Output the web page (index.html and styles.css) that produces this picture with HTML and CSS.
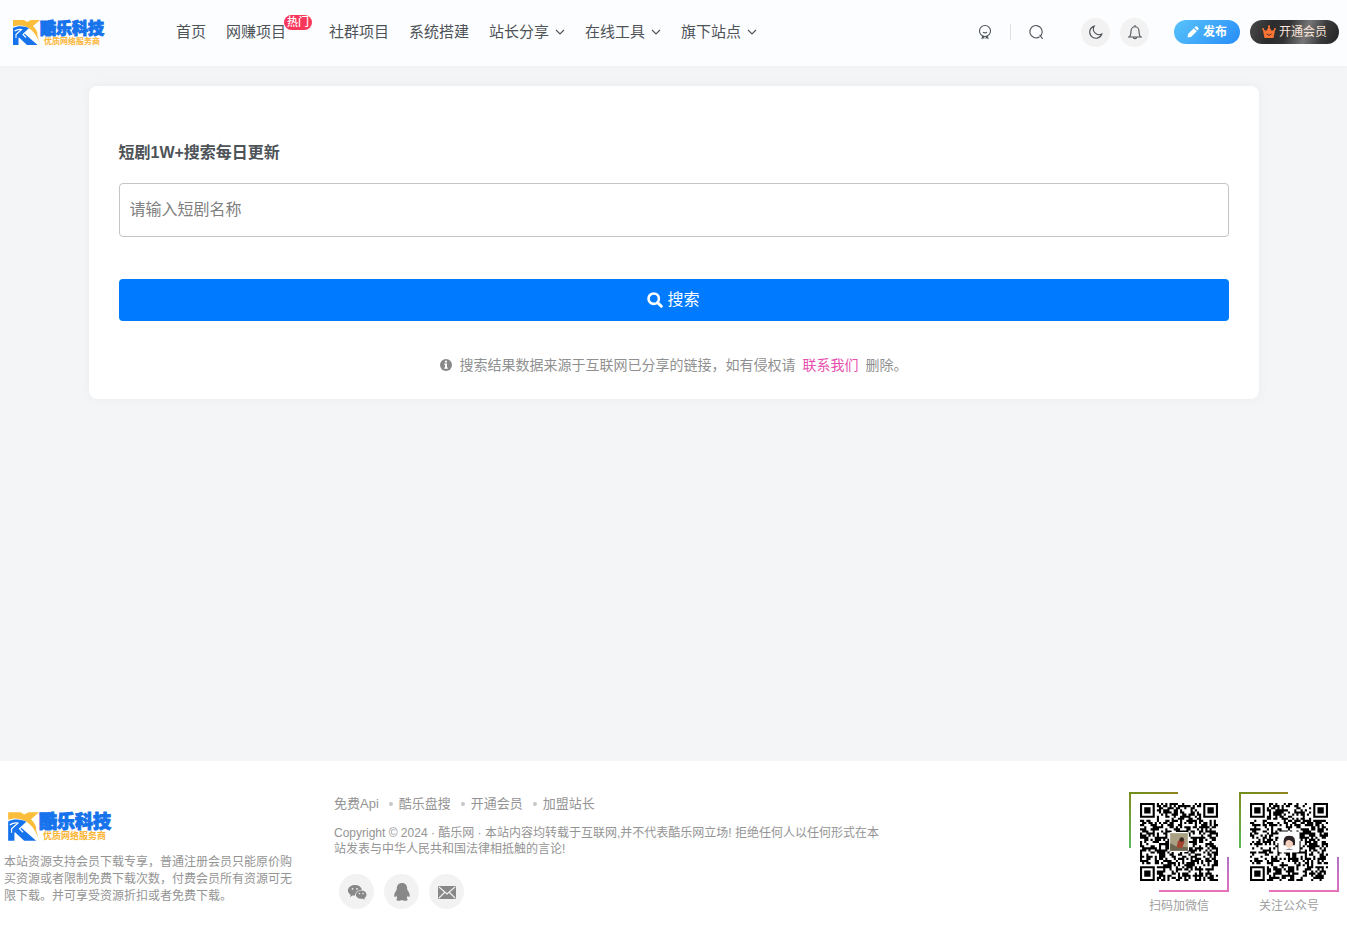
FILE: index.html
```html
<!DOCTYPE html>
<html lang="zh-CN">
<head>
<meta charset="utf-8">
<meta name="viewport" content="width=device-width, initial-scale=1">
<title>短剧搜索 - 酷乐科技</title>
<link rel="stylesheet" href="styles.css">
</head>
<body>
<svg class="defs" aria-hidden="true">
  <symbol id="mark" viewBox="0 0 28 28">
    <path fill="#fbbd3a" d="M1 2H12L15 4L19 2H28L21 8C24 11 26 14 25.5 18L28 26C24 14 16 6.500 6 7.500L1 8.500Z"/>
    <path fill="#1673ec" d="M1 10C6 7.500 13 8 17.500 10.500L12.500 15.500L25.500 27H15L7 19.500L6.500 20V27H1Z"/>
    <path d="M4 20V16.500L9.500 11.500Q6 10.800 2.500 13M17.500 10.500L11 16.500L14 19.500" fill="none" stroke="#fff" stroke-width="1.100"/>
  </symbol>
  <symbol id="chevron" viewBox="0 0 10 10"><path d="M1 3L5 7L9 3" fill="none" stroke="currentColor" stroke-width="1.1"/></symbol>
</svg>

<header class="header">
  <a class="brand logo" href="#"><svg><use href="#mark"/></svg><span class="logo-text"><b>酷乐科技</b><small>优质网络服务商</small></span></a>
  <nav class="nav">
    <a href="#">首页</a>
    <a class="hot" href="#">网赚项目<span class="badge">热门</span></a>
    <a href="#">社群项目</a>
    <a href="#">系统搭建</a>
    <a href="#">站长分享<svg class="chev"><use href="#chevron"/></svg></a>
    <a href="#">在线工具<svg class="chev"><use href="#chevron"/></svg></a>
    <a href="#">旗下站点<svg class="chev"><use href="#chevron"/></svg></a>
  </nav>
  <div class="tools">
    <button class="icon-btn" aria-label="用户"><svg viewBox="0 0 16 16"><circle cx="8" cy="7" r="5.5"/><path d="M6 8.2Q8 9.6 10 8.2M6 12L4.800 15M6 12L7.2 14.6M10 12L8.8 14.6M10 12L11.200 15"/></svg></button>
    <span class="divider"></span>
    <button class="icon-btn" aria-label="搜索"><svg viewBox="0 0 16 16"><path d="M11.6 12.8A6.2 6.2 0 1 1 13.4 10.8Q13 12 11.6 11M12 11.5L14.6 14.8"/></svg></button>
    <button class="icon-btn round moon" aria-label="夜间模式"><svg viewBox="0 0 16 16"><path d="M6.2 2.1A5.7 5.7 0 0 0 13.8 10A6.2 6.2 0 1 1 6.2 2.1Z"/></svg></button>
    <button class="icon-btn round" aria-label="消息"><svg viewBox="0 0 16 16"><path d="M1 13H15M2.8 12.8Q4 10.5 4 7.2A4 4.4 0 0 1 12 7.2Q12 10.5 13.2 12.8M8 1V3M6.3 13.6Q8 16 9.7 13.6"/></svg></button>
    <button class="pill publish"><svg viewBox="0 0 12 12"><path fill="#fff" d="M.5 11.5L1 8L6.8 2.2L9.8 5.2L4 11ZM7.5 1.5L8.5 .6Q9.5 0 10.3 .8L11.2 1.7Q12 2.6 11.3 3.5L10.4 4.4Z"/></svg>发布</button>
    <button class="pill vip"><svg viewBox="0 0 14 14"><path fill="#ff7434" d="M1.8 9.6H12.2L11.5 13H2.5ZM.8 4L4.2 6L7 1.5L9.8 6L13.2 4L12.2 9.8H1.8Z"/><g fill="#ff7434"><circle cx="7" cy="1.4" r="1.1"/><circle cx="1.1" cy="4" r="1"/><circle cx="12.9" cy="4" r="1"/></g><path d="M4.5 9Q7 11.5 9.5 9" fill="none" stroke="#54302a"/></svg>开通会员</button>
  </div>
</header>

<main class="main">
  <form class="card">
    <label class="title" for="q">短剧1W+搜索每日更新</label>
    <input class="field" id="q" type="text" placeholder="请输入短剧名称">
    <button class="submit" type="button"><svg viewBox="0 0 16 16"><circle cx="6.7" cy="6.7" r="5.2" fill="none" stroke="#fff" stroke-width="2.6"/><path d="M10.5 10.5L14.3 14.3" stroke="#fff" stroke-width="3" stroke-linecap="round"/></svg>搜索</button>
    <p class="notice"><svg viewBox="0 0 12 12"><circle cx="6" cy="6" r="6" fill="#888"/><path fill="#fff" d="M5 1.8H7V3.5H5ZM4.2 4.6H7V8.6H7.8V9.8H4.2V8.6H5V5.8H4.2Z"/></svg>搜索结果数据来源于互联网已分享的链接，如有侵权请<a href="#">联系我们</a>删除。</p>
  </form>
</main>

<footer class="footer">
  <section class="about">
    <div class="logo logo-large"><svg><use href="#mark"/></svg><span class="logo-text"><b>酷乐科技</b><small>优质网络服务商</small></span></div>
    <p>本站资源支持会员下载专享，普通注册会员只能原价购买资源或者限制免费下载次数，付费会员所有资源可无限下载。并可享受资源折扣或者免费下载。</p>
  </section>
  <section class="info">
    <ul class="links">
      <li><a href="#">免费Api</a></li>
      <li><a href="#">酷乐盘搜</a></li>
      <li><a href="#">开通会员</a></li>
      <li><a href="#">加盟站长</a></li>
    </ul>
    <p>Copyright © 2024 · 酷乐网 · 本站内容均转载于互联网,并不代表酷乐网立场! 拒绝任何人以任何形式在本站发表与中华人民共和国法律相抵触的言论!</p>
    <div class="social">
      <a href="#" aria-label="微信"><svg viewBox="0 0 20 20"><path fill="#888" d="M8 3C12 3 14.6 5.2 14.8 8C11 7.6 8 10 8.2 13.6L5.5 13.4L3 15L3.6 12.7C-1.4 9.6 1 3 8 3Z"/><path fill="#888" d="M14 8.6C20 8.6 21 14 17.3 16L17.8 17.8L15.5 16.7C11 17.2 8.8 15 8.9 12.6C9 10.5 11 8.6 14 8.6Z"/><g fill="#f2f2f2"><circle cx="5.5" cy="6.8" r=".9"/><circle cx="10" cy="6.8" r=".9"/><circle cx="12.4" cy="11.5" r=".8"/><circle cx="16" cy="11.5" r=".8"/></g></svg></a>
      <a href="#" aria-label="QQ"><svg viewBox="0 0 20 20"><path fill="#888" d="M10 1C13.5 1 15.4 3.5 15.2 7.5C17 10 18.5 13 17.5 15C17 15.4 16.3 14.5 15.8 13.8L14.7 16.2C16 17 16 18.5 14 18.8C12 19 11 18.5 10 18C9 18.5 8 19 6 18.8C4 18.5 4 17 5.3 16.2L4.2 13.8C3.7 14.5 3 15.4 2.5 15C1.5 13 3 10 4.8 7.5C4.6 3.5 6.5 1 10 1Z"/></svg></a>
      <a href="#" aria-label="邮箱"><svg viewBox="0 0 20 20"><rect x="1" y="4" width="18" height="13" rx="1" fill="#888"/><path d="M2 5L10 12L18 5M2 16L7.5 10.5M18 16L12.5 10.5" fill="none" stroke="#f2f2f2" stroke-width="1.1"/></svg></a>
    </div>
  </section>
  <section class="codes">
    <figure>
      <div class="frame"><svg class="qr" viewBox="0 0 37 37" data-seed="7" role="img" aria-label="微信二维码"><path class="modules"/><rect x="13.8" y="13.8" width="9.4" height="9.4" rx="1" fill="#fff"/><rect x="14.3" y="14.3" width="8.4" height="8.4" fill="#aaa084"/><path fill="#6d6652" d="M14.3 19L17 20.5L22.7 21V22.7H14.3Z"/><path fill="#a3442e" d="M17.4 21L18 18L20 16.8L21.2 18.5L19.8 21.5Z"/><circle cx="19.8" cy="17.3" r="1.1" fill="#3b2820"/></svg></div>
      <figcaption>扫码加微信</figcaption>
    </figure>
    <figure>
      <div class="frame"><svg class="qr" viewBox="0 0 37 37" data-seed="29" role="img" aria-label="公众号二维码"><path class="modules"/><rect x="13.5" y="13.5" width="10" height="10" rx="1" fill="#fff"/><path fill="#2d2525" d="M16 20Q15.4 15.4 18.6 15.6Q22 15.4 21.3 20Z"/><circle cx="18.6" cy="19.4" r="1.8" fill="#f3cfbd"/><path fill="#2d2525" d="M16.5 18.8L18 17L20.8 18.8V17.2L18.6 16.2Z"/><path fill="#8b8795" d="M16.8 22.3Q18.6 20.8 20.4 22.3Z"/></svg></div>
      <figcaption>关注公众号</figcaption>
    </figure>
  </section>
</footer>
<script src="qr.js"></script>
</body>
</html>
```
FILE: styles.css
```css
* { box-sizing: border-box; }
body {
  margin: 0;
  min-height: 100vh;
  display: flex;
  flex-direction: column;
  background: #f4f5f7;
  color: #4e5358;
  font: 14px/20px "Liberation Sans", "Noto Sans CJK SC", sans-serif;
}
a { color: inherit; text-decoration: none; }
button { font: inherit; border: 0; padding: 0; cursor: pointer; }
p, ul, figure { margin: 0; padding: 0; }
.defs { position: absolute; width: 0; height: 0; }

.logo { display: flex; align-items: center; height: 28px; font-family: "Noto Sans CJK SC", sans-serif; }
.logo svg { width: 28px; height: 28px; }
.logo-text { display: flex; flex-direction: column; }
.logo b { color: #1673ec; font-size: 16px; font-weight: 900; line-height: 18px; -webkit-text-stroke: 1px #1673ec; }
.logo small { padding-left: 4px; color: #fbb536; font-size: 8px; font-weight: 700; line-height: 10px; }
.logo-large { height: 31px; padding-left: 3px; }
.logo-large svg { width: 32px; height: 32px; }
.logo-large b { font-size: 18px; line-height: 20px; }
.logo-large small { font-size: 9px; line-height: 11px; }

.header {
  display: flex;
  align-items: center;
  height: 66px;
  padding: 0 8px 2px 12px;
  background: #fcfdff;
  box-shadow: 0 0 4px rgba(0, 0, 0, .03);
}
.brand { margin-right: 72px; }
.nav { display: flex; gap: 20px; font-size: 15px; white-space: nowrap; }
.nav a { display: flex; align-items: center; }
.hot { position: relative; margin-right: 23px; }
.badge {
  position: absolute;
  left: 58px;
  top: -7px;
  padding: 0 3px;
  border-radius: 8px;
  background: #f7385a;
  color: #fff;
  font-size: 11px;
  font-weight: 500;
  line-height: 15px;
}
.chev { width: 10px; height: 10px; margin-left: 6px; }
.tools { display: flex; align-items: center; margin-left: auto; }
.icon-btn { display: flex; align-items: center; justify-content: center; width: 29px; height: 29px; background: none; }
.icon-btn svg { width: 16px; height: 16px; fill: none; stroke: #4e5358; stroke-width: 1.1; }
.divider { width: 1px; height: 16px; margin: 0 10px 0 11px; background: #dfe1e5; }
.round { border-radius: 50%; background: #f2f2f2; margin-right: 10px; }
.moon { margin-left: 31px; }
.pill { display: flex; align-items: center; justify-content: center; height: 24px; border-radius: 12px; color: #fff; font-size: 12px; }
.publish { width: 66px; gap: 4px; margin: 0 10px 0 15px; background: linear-gradient(135deg, #59c3fb, #268df7); font-weight: 700; }
.publish svg { width: 12px; height: 12px; }
.vip { width: 89px; gap: 3px; background: linear-gradient(110deg, #4a4a4a, #2c2c2c 25%, #333 42%, #777 62%, #3a3a3a 80%, #222); color: #fbe5da; }
.vip svg { width: 14px; height: 14px; }

.main { flex: 1; padding: 20px; }
.card {
  display: flex;
  flex-direction: column;
  max-width: 1170px;
  margin: 0 auto;
  padding: 56px 30px 24px;
  border-radius: 8px;
  background: #fff;
  box-shadow: 0 0 10px rgba(116, 116, 116, .08);
}
.title { font-size: 16px; font-weight: 700; line-height: 21px; }
.field {
  height: 54px;
  margin: 20px 0 42px;
  padding: 0 10px;
  border: 1px solid #c4c4c4;
  border-radius: 4px;
  background: #fff;
  color: #4e5358;
  font: inherit;
  font-size: 16px;
}
.field::placeholder { color: #808080; }
.submit {
  display: flex;
  align-items: center;
  justify-content: center;
  gap: 4px;
  height: 42px;
  border-radius: 4px;
  background: #007bff;
  color: #fff;
  font-size: 16px;
}
.submit svg { width: 16px; height: 16px; }
.notice { display: flex; justify-content: center; align-items: center; margin-top: 34px; color: #909090; }
.notice svg { width: 12px; height: 12px; margin-right: 8px; }
.notice a { margin: 0 7px; color: #e64fae; }

.footer {
  display: flex;
  min-height: 174px;
  padding: 31px 8px 20px 4px;
  background: #fff;
  color: #949494;
  font-size: 12px;
  line-height: 16px;
}
.about { width: 290px; margin-right: 40px; padding-top: 18px; }
.about p { margin-top: 13px; line-height: 17px; }
.links { display: flex; gap: 10px; list-style: none; font-size: 13px; line-height: 24px; }
.links li { display: flex; align-items: center; gap: 6px; }
.links li + li::before { content: ""; width: 4px; height: 4px; border-radius: 50%; background: #c8c8c8; }
.info { width: 550px; }
.info p { margin: 9px 0 17px; }
.social { display: flex; gap: 10px; padding-left: 5px; }
.social a { display: flex; align-items: center; justify-content: center; width: 35px; height: 35px; border-radius: 50%; background: #f2f2f2; }
.social svg { width: 20px; height: 20px; }
.codes { display: flex; gap: 10px; margin-left: auto; text-align: center; color: #a0a0a0; }
.frame {
  width: 100px;
  height: 100px;
  padding: 11px;
  background:
    linear-gradient(90deg, #6f8f1c, #8f8420) 0 0 / 49px 2px,
    linear-gradient(#7f8c1c, #5cb85c) 0 0 / 2px 56px,
    linear-gradient(#b070c4, #e070c0) 100% 100% / 2px 35px,
    linear-gradient(#e873b8, #e873b8) 100% 100% / 70px 2px;
  background-repeat: no-repeat;
}
.qr { display: block; width: 78px; height: 78px; }
.modules { fill: #000; }
.codes figcaption { margin-top: 6px; }
```
FILE: qr.js
```js
// Fills each .qr svg with a 37x37 module grid and three finder squares.
const SIZE = 37;

function finder(x, y) {
  const corners = [[0, 0], [SIZE - 7, 0], [0, SIZE - 7]];
  for (const [cx, cy] of corners) {
    const dx = x - cx, dy = y - cy;
    if (dx >= -1 && dx <= 7 && dy >= -1 && dy <= 7) {
      const ring = Math.max(Math.abs(dx - 3), Math.abs(dy - 3));
      return ring === 3 || ring < 2;
    }
  }
  return null;
}

document.querySelectorAll(".qr").forEach((svg) => {
  let state = Number(svg.dataset.seed);
  const next = () => (state = (state * 48271) % 2147483647) / 2147483647;
  for (let i = 0; i < 20; i++) next();
  let d = "";
  for (let y = 0; y < SIZE; y++) {
    for (let x = 0; x < SIZE; x++) {
      const fixed = finder(x, y);
      const dark = fixed === null ? next() < 0.5 : fixed;
      if (dark) d += `M${x} ${y}h1v1h-1z`;
    }
  }
  svg.querySelector(".modules").setAttribute("d", d);
});
```
